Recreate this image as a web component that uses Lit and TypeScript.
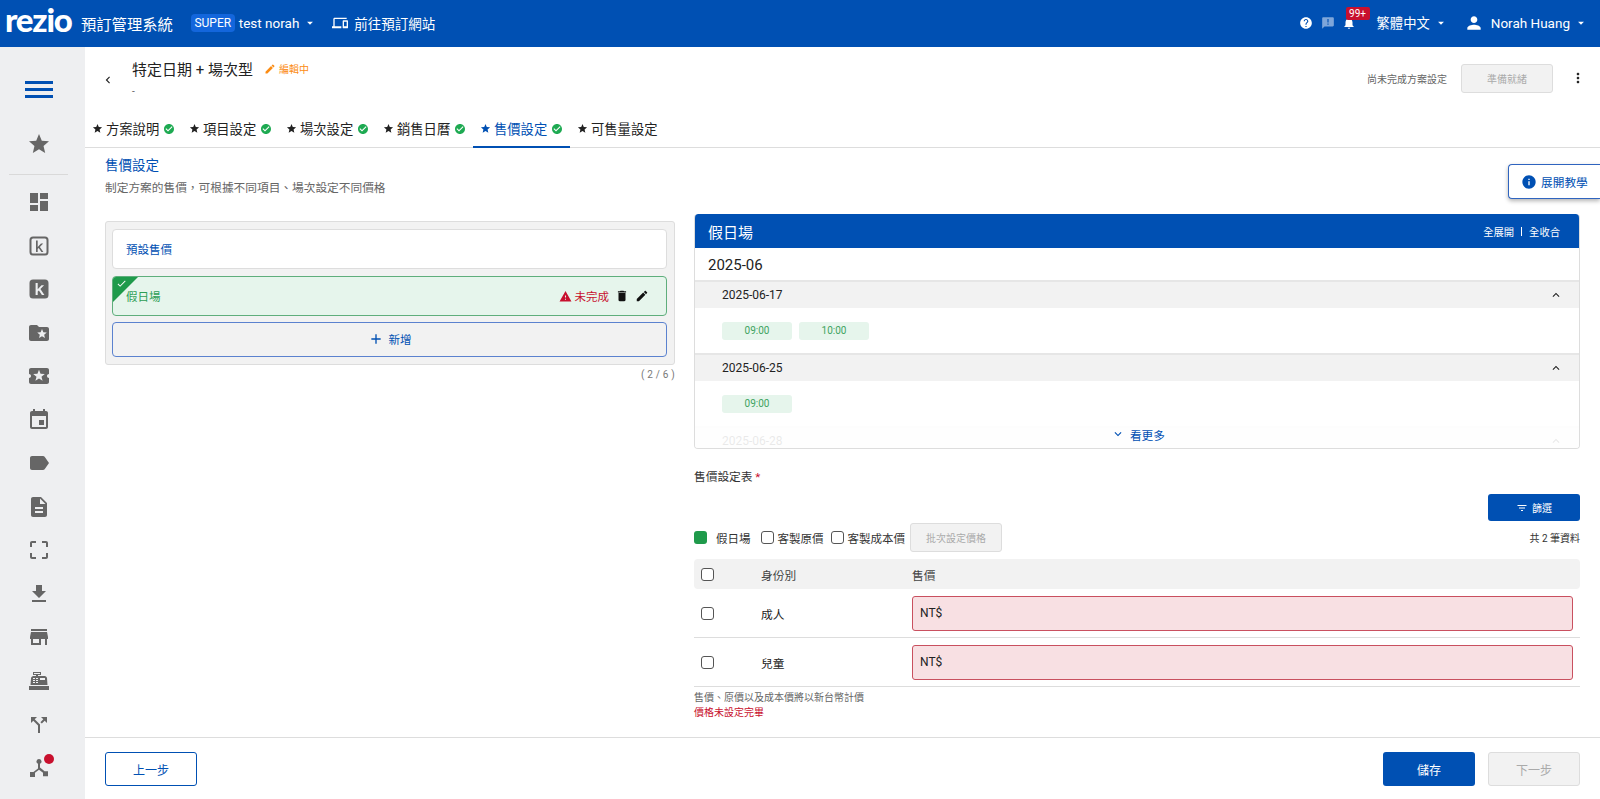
import { LitElement, html, css, svg } from "lit";
import { customElement } from "lit/decorators.js";

const P: Record<string, string> = {
  star: "M12 17.27L18.18 21l-1.64-7.03L22 9.24l-7.19-.61L12 2 9.19 8.63 2 9.24l5.46 4.73L5.82 21z",
  dash: "M3 13h8V3H3v10zm0 8h8v-6H3v6zm10 0h8V11h-8v10zm0-18v6h8V3h-8z",
  folder: "M20 6h-8l-2-2H4c-1.1 0-1.99.9-1.99 2L2 18c0 1.1.9 2 2 2h16c1.1 0 2-.9 2-2V8c0-1.1-.9-2-2-2zm-2.06 11L15 15.28 12.06 17l.78-3.33-2.59-2.24 3.41-.29L15 8l1.34 3.14 3.41.29-2.59 2.24.78 3.33z",
  ticket: "M20 12c0-1.1.9-2 2-2V6c0-1.1-.9-2-2-2H4c-1.1 0-1.99.9-1.99 2v4c1.1 0 1.99.9 1.99 2s-.89 2-2 2v4c0 1.1.9 2 2 2h16c1.1 0 2-.9 2-2v-4c-1.1 0-2-.9-2-2zm-4.42 4.8L12 14.5l-3.58 2.3 1.08-4.12-3.29-2.69 4.24-.25L12 5.8l1.54 3.95 4.24.25-3.29 2.69 1.09 4.11z",
  event: "M17 12h-5v5h5v-5zM16 1v2H8V1H6v2H5c-1.11 0-1.99.9-1.99 2L3 19c0 1.1.89 2 2 2h14c1.1 0 2-.9 2-2V5c0-1.1-.9-2-2-2h-1V1h-2zm3 18H5V8h14v11z",
  label: "M17.63 5.84C17.27 5.33 16.67 5 16 5L5 5.01C3.9 5.01 3 5.9 3 7v10c0 1.1.9 1.99 2 1.99L16 19c.67 0 1.27-.33 1.63-.84L22 12l-4.37-6.16z",
  doc: "M14 2H6c-1.1 0-1.99.9-1.99 2L4 20c0 1.1.89 2 1.99 2H18c1.1 0 2-.9 2-2V8l-6-6zm2 16H8v-2h8v2zm0-4H8v-2h8v2zm-3-5V3.5L18.5 9H13z",
  crop: "M3 5v4h2V5h4V3H5c-1.1 0-2 .9-2 2zm2 10H3v4c0 1.1.9 2 2 2h4v-2H5v-4zm14 4h-4v2h4c1.1 0 2-.9 2-2v-4h-2v4zm0-16h-4v2h4v4h2V5c0-1.1-.9-2-2-2z",
  down: "M19 9h-4V3H9v6H5l7 7 7-7zM5 18v2h14v-2H5z",
  store: "M20 4H4v2h16V4zm1 10v-2l-1-5H4l-1 5v2h1v6h10v-6h4v6h2v-6h1zm-9 4H6v-4h6v4z",
  cash: "M2,17H22V21H2V17M6.25,7H9V6H6V3H14V6H11V7H17.8C18.8,7 19.8,8 20,9L20.5,16H3.5L4.05,9C4.25,8 5.25,7 6.25,7M13,9V11H18V9H13M6,9V10H8V9H6M9,9V10H11V9H9M6,11V12H8V11H6M9,11V12H11V11H9M6,13V14H8V13H6M9,13V14H11V13H9M7,4V5H13V4H7Z",
  split: "M14 4l2.29 2.29-2.88 2.88 1.42 1.42 2.88-2.88L20 10V4zm-4 0H4v6l2.29-2.29 4.71 4.7V20h2v-8.41l-5.29-5.3z",
  help: "M12 2C6.48 2 2 6.48 2 12s4.48 10 10 10 10-4.48 10-10S17.52 2 12 2zm1 17h-2v-2h2v2zm2.07-7.75l-.9.92C13.45 12.9 13 13.5 13 15h-2v-.5c0-1.1.45-2.1 1.17-2.83l1.24-1.26c.37-.36.59-.86.59-1.41 0-1.1-.9-2-2-2s-2 .9-2 2H8c0-2.21 1.79-4 4-4s4 1.79 4 4c0 .88-.36 1.68-.93 2.25z",
  ann: "M20 2H4c-1.1 0-1.99.9-1.99 2L2 22l4-4h14c1.1 0 2-.9 2-2V4c0-1.1-.9-2-2-2zm-7 9h-2V5h2v6zm0 4h-2v-2h2v2z",
  bell: "M12 22c1.1 0 2-.9 2-2h-4c0 1.1.89 2 2 2zm6-6v-5c0-3.07-1.64-5.64-4.5-6.32V4c0-.83-.67-1.5-1.5-1.5s-1.5.67-1.5 1.5v.68C7.63 5.36 6 7.92 6 11v5l-2 2v1h16v-1l-2-2z",
  person: "M12 12c2.21 0 4-1.79 4-4s-1.79-4-4-4-4 1.79-4 4 1.79 4 4 4zm0 2c-2.67 0-8 1.34-8 4v2h16v-2c0-2.66-5.33-4-8-4z",
  devices: "M4 6h18V4H4c-1.1 0-2 .9-2 2v11H0v3h14v-3H4V6zm19 2h-6c-.55 0-1 .45-1 1v10c0 .55.45 1 1 1h6c.55 0 1-.45 1-1V9c0-.55-.45-1-1-1zm-1 9h-4v-7h4v7z",
  edit: "M3 17.25V21h3.75L17.81 9.94l-3.75-3.75L3 17.25zM20.71 7.04c.39-.39.39-1.02 0-1.41l-2.34-2.34c-.39-.39-1.02-.39-1.41 0l-1.83 1.83 3.75 3.75 1.83-1.83z",
  ok: "M12 2C6.48 2 2 6.48 2 12s4.48 10 10 10 10-4.48 10-10S17.52 2 12 2zm-2 15l-5-5 1.41-1.41L10 14.17l7.59-7.59L19 8l-9 9z",
  del: "M6 19c0 1.1.9 2 2 2h8c1.1 0 2-.9 2-2V7H6v12zM19 4h-3.5l-1-1h-5l-1 1H5v2h14V4z",
  warn: "M1 21h22L12 2 1 21zm12-3h-2v-2h2v2zm0-4h-2v-4h2v4z",
  info: "M12 2C6.48 2 2 6.48 2 12s4.48 10 10 10 10-4.48 10-10S17.52 2 12 2zm1 15h-2v-6h2v6zm0-8h-2V7h2v2z",
  filter: "M10 18h4v-2h-4v2zM3 6v2h18V6H3zm3 7h12v-2H6v2z",
  more: "M16.59 8.59L12 13.17 7.41 8.59 6 10l6 6 6-6z",
  less: "M12 8l-6 6 1.41 1.41L12 10.83l4.59 4.58L18 14z",
  add: "M19 13h-6v6h-2v-6H5v-2h6V5h2v6h6v2z",
  vert: "M12 8c1.1 0 2-.9 2-2s-.9-2-2-2-2 .9-2 2 .9 2 2 2zm0 2c-1.1 0-2 .9-2 2s.9 2 2 2 2-.9 2-2-.9-2-2-2zm0 6c-1.1 0-2 .9-2 2s.9 2 2 2 2-.9 2-2-.9-2-2-2z",
  caret: "M7 10l5 5 5-5z",
  left: "M15.41 7.41L14 6l-6 6 6 6 1.41-1.41L10.83 12z",
  check: "M9 16.17L4.83 12l-1.42 1.41L9 19 21 7l-1.41-1.41z",
  kfill: "M6 2.5h12A3.5 3.5 0 0 1 21.5 6v12a3.5 3.5 0 0 1-3.5 3.5H6A3.5 3.5 0 0 1 2.5 18V6A3.5 3.5 0 0 1 6 2.5zM8.6 6v12h2.1v-3.4l1.2-1.2 3 4.6h2.5l-4-6 3.7-3.7h-2.6l-3.8 4V6z",
  kline: "M6 2.5h12A3.5 3.5 0 0 1 21.5 6v12a3.5 3.5 0 0 1-3.5 3.5H6A3.5 3.5 0 0 1 2.5 18V6A3.5 3.5 0 0 1 6 2.5zm0 2A1.5 1.5 0 0 0 4.500 6v12A1.5 1.5 0 0 0 6 19.500h12a1.500 1.500 0 0 0 1.500-1.500V6A1.500 1.500 0 0 0 18 4.500zM9 6.500h1.700v6.400l3.300-3.400h2.200l-3.300 3.400 3.500 5h-2l-2.700-3.900-1 1v2.900H9z",
  nodes: "M12 3a2.500 2.500 0 0 1 1 4.800v3.800l4.600 3.600H21v5h-5v-3.400l-4-3.100-4 3.100V21H3v-5h3.400l4.600-3.600V7.800A2.500 2.500 0 0 1 12 3z",
};

const ic = (name: string, cls = "") =>
  html`<svg class="ic ${cls}" viewBox="0 0 24 24" aria-hidden="true">${svg`<path d=${P[name]}></path>`}</svg>`;

const SIDE = ["dash", "kline", "kfill", "folder", "ticket", "event", "label", "doc", "crop", "down", "store", "cash", "split"];
const TABS = ["方案說明", "項目設定", "場次設定", "銷售日曆", "售價設定", "可售量設定"];

@customElement("app-root")
export class AppRoot extends LitElement {
  static styles = css`
    :host {
      display: flex;
      flex-direction: column;
      width: 1600px;
      height: 799px;
      overflow: hidden;
      background: #fff;
      color: #222;
      font-family: Roboto, "Noto Sans CJK TC", sans-serif;
      font-size: 12px;
    }
    .ic { display: block; flex: none; fill: currentColor; }
    .s10 { width: 10px; height: 10px; }
    .s11 { width: 11px; height: 11px; }
    .s12 { width: 12px; height: 12px; }
    .s13 { width: 13px; height: 13px; }
    .s14 { width: 14px; height: 14px; }
    .s16 { width: 16px; height: 16px; }
    .s18 { width: 18px; height: 18px; }
    .s20 { width: 20px; height: 20px; }
    .s24 { width: 24px; height: 24px; }

    /* top bar */
    .top {
      flex: none;
      height: 47px;
      box-sizing: border-box;
      padding-bottom: 2px;
      background: #0050b3;
      color: #fff;
      display: flex;
      align-items: center;
      font-size: 13.5px;
    }
    .logo {
      margin-left: 5px;
      width: 72px;
      font-family: Lato, sans-serif;
      font-weight: 900;
      font-size: 33px;
      line-height: 30px;
      letter-spacing: -1.2px;
      padding-bottom: 8px;
    }
    .sys { margin-left: 4px; font-size: 15.3px; }
    .super {
      margin-left: 18px;
      background: #1366dc;
      border-radius: 4px;
      width: 44px;
      height: 18px;
      line-height: 18px;
      text-align: center;
      font-size: 12px;
      margin-right: 4px;
    }
    .caret { margin-left: 4px; }
    .devices { margin-left: 15px; margin-right: 6px; }
    .tools { margin-left: auto; display: flex; align-items: center; }
    .muted { color: #7ea6da; margin-left: 8px; }
    .bell { margin-left: 7px; position: relative; }
    .badge {
      position: absolute;
      left: 4px;
      top: -9px;
      width: 24px;
      height: 13px;
      line-height: 13px;
      border-radius: 2px;
      background: #c8102e;
      font-size: 10px;
      text-align: center;
    }
    .lang { margin-left: 21px; font-size: 13.3px; }
    .person { margin-left: 16px; margin-right: 7px; }
    .tools .last { margin-right: 12px; }

    /* body */
    .body { flex: 1; min-height: 0; display: flex; }
    .side {
      flex: none;
      width: 85px;
      background: #eeeff1;
      color: #666;
      display: flex;
      flex-direction: column;
      align-items: center;
      padding-top: 30px;
      box-sizing: border-box;
      padding-right: 8px;
    }
    .ham { width: 28px; height: 24px; display: flex; flex-direction: column; justify-content: center; gap: 4px; }
    .ham i { display: block; height: 3px; background: #0050b3; }
    .side .fav { margin-top: 31px; }
    .rule { width: 59px; height: 1px; background: #d9d9d9; margin: 18px 0 15px; }
    .nav { display: flex; flex-direction: column; gap: 19.56px; }
    .node { position: relative; }
    .dot { position: absolute; width: 10px; height: 10px; border-radius: 50%; background: #c8102e; right: -3px; top: -2px; }

    .main { flex: 1; min-width: 0; display: flex; flex-direction: column; position: relative; }
    .head { flex: none; height: 66px; display: flex; align-items: center; padding: 0 14px 0 16px; }
    .back { margin-right: 17px; color: #222; }
    .title { display: flex; align-items: center; height: 22px; font-size: 15px; color: #222; }
    .editing { display: flex; align-items: center; margin-left: 11px; color: #fb8c14; font-size: 10px; gap: 3px; }
    .sub { height: 23px; line-height: 23px; font-size: 10px; color: #666; }
    .state { margin-left: auto; color: #666; font-size: 10px; margin-right: 14px; margin-bottom: 4px; }
    .ready {
      width: 92px; height: 29px; box-sizing: border-box; margin-bottom: 4px;
      display: flex; align-items: center; justify-content: center;
      background: #f2f2f2; border: 1px solid #ddd; border-radius: 3px; color: #aaa; font-size: 10px;
    }
    .kebab { margin-left: 17px; margin-bottom: 4px; color: #222; }

    .tabs { flex: none; height: 35px; box-sizing: border-box; border-bottom: 1px solid #ddd; display: flex; }
    .tab {
      display: flex; align-items: center; width: 97px; height: 35px; box-sizing: border-box; padding: 0 0 4px 7px;
      font-size: 13.3px; color: #222; gap: 3px; flex: none;
    }
    .tab:last-child { width: auto; }
    .tab .g { color: #1eaa52; margin-left: 1px; }
    .tab.on { color: #0050b3; border-bottom: 2px solid #0050b3; padding-bottom: 2px; }

    .tutor {
      position: absolute; right: 0; top: 117px; width: 92px; height: 35px; box-sizing: border-box;
      display: flex; align-items: center; gap: 4px; padding-left: 12px;
      background: #fff; border: 1px solid #2f64bf; border-right: none; border-radius: 4px 0 0 4px;
      box-shadow: 0 2px 4px rgba(0,0,0,.3); color: #0050b3; font-size: 11.7px;
    }

    .content { flex: 1; min-height: 0; padding: 7px 20px 0 20px; }
    h2 { margin: 0; font-weight: 400; font-size: 13.5px; line-height: 20px; color: #0050b3; }
    .desc { margin-top: 5px; line-height: 16px; color: #666; font-size: 11.7px; }
    .cols { display: flex; gap: 19px; margin-top: 18px; }
    .left { flex: none; width: 570px; margin-top: 7px; }
    .right { flex: 1; min-width: 0; }

    .box {
      box-sizing: border-box; height: 144px; background: #f2f2f2; border: 1px solid #ddd; border-radius: 3px;
      padding: 6.5px 7px 0 6px; display: flex; flex-direction: column; gap: 6.5px;
    }
    .item {
      height: 40px; flex: none; box-sizing: border-box; padding: 0 14px 0 13px; background: #fff; border: 1px solid #ddd; border-radius: 4px;
      display: flex; align-items: center; font-size: 11.5px; color: #0050b3; position: relative; overflow: hidden;
    }
    .item.sel { background: #e6f5ec; border-color: #5fae7c; color: #2e9e55; margin-top: 1px; }
    .corner { position: absolute; left: 0; top: 0; width: 0; height: 0; border-style: solid; border-width: 25px 25px 0 0; border-color: #1f9a4b transparent transparent transparent; }
    .tick { position: absolute; left: 3px; top: 1px; color: #fff; }
    .acts { margin-left: auto; display: flex; align-items: center; color: #c8102e; padding-right: 3px; }
    .acts .t { margin-left: 3px; }
    .acts .b { color: #111; margin-left: 6px; }
    .acts .b2 { color: #111; margin-left: 6px; }
    .addb {
      height: 35px; flex: none; box-sizing: border-box; margin-top: -1px; background: #f2f2f2; border: 1px solid #5b82cf; border-radius: 4px;
      display: flex; align-items: center; justify-content: center; gap: 5px; color: #0050b3; font-size: 11.5px;
    }
    .count { margin-top: 3px; text-align: right; font-size: 10px; color: #777; line-height: 14px; letter-spacing: .2px; }

    .panel {
      height: 235px; box-sizing: border-box; border: 1px solid #ddd; border-top: none; border-radius: 4px;
      position: relative; overflow: hidden;
    }
    .phead {
      height: 34px; margin: 0 -1px; background: #0050b3; color: #fff; display: flex; align-items: center; padding: 0 20px 0 14px;
      font-size: 15px; border-radius: 4px 4px 0 0;
    }
    .links { margin-left: auto; font-size: 10.3px; display: flex; align-items: center; gap: 7px; }
    .links i { display: block; width: 1px; height: 9px; background: #fff; }
    .month { height: 32px; line-height: 34px; padding-left: 13px; font-size: 15px; color: #222; }
    .ghead {
      height: 28px; box-sizing: border-box; border-top: 2px solid #e6e6e6; background: #f2f2f2;
      display: flex; align-items: center; padding: 0 16px 0 27px; font-size: 12px; color: #222;
    }
    .ghead .ic { margin-left: auto; }
    .gbody { height: 45px; box-sizing: border-box; padding-top: 14px; padding-left: 27px; display: flex; gap: 7px; }
    .tag { width: 70px; height: 18px; line-height: 18px; text-align: center; border-radius: 3px; background: #e6f5ec; color: #3ea35f; font-size: 10px; }
    .fade {
      position: absolute; left: 0; right: 0; bottom: 0; height: 24px; background: rgba(255,255,255,.9);
      display: flex; align-items: center; justify-content: flex-end; gap: 5px; padding: 0 414px 4px 0; color: #0050b3; font-size: 11.7px;
      box-sizing: border-box;
    }

    .ftitle { margin-top: 20px; line-height: 16px; color: #333; font-size: 11.7px; }
    .ftitle b { color: #c8102e; font-weight: 400; }
    .frow { margin-top: 9px; display: flex; justify-content: flex-end; }
    .btn {
      height: 27px; width: 92px; box-sizing: border-box; border-radius: 3px; background: #0050b3; color: #fff;
      display: flex; align-items: center; justify-content: center; gap: 4px; font-size: 10px;
    }
    .legend { margin-top: 2px; height: 29px; display: flex; align-items: center; font-size: 11.5px; color: #333; }
    .swatch { width: 13px; height: 13px; border-radius: 3px; background: #1f9a4b; margin-right: 9px; }
    .cb { display: block; flex: none; width: 13px; height: 13px; box-sizing: border-box; border: 1px solid #555; border-radius: 3px; background: #fff; }
    .legend .cb { margin-left: 10px; margin-right: 4px; }
    .legend .cb.n { margin-left: 7px; }
    .batch {
      margin-left: 5px; width: 92px; height: 29px; box-sizing: border-box; background: #f2f2f2; border: 1px solid #ddd; border-radius: 3px;
      display: flex; align-items: center; justify-content: center; color: #aaa; font-size: 10px;
    }
    .total { margin-left: auto; font-size: 10px; color: #333; }

    .tr { display: grid; grid-template-columns: 60px 151px 1fr; align-items: center; padding: 0 7px; font-size: 11.7px; }
    .thead { margin-top: 7px; height: 30px; background: #f2f2f2; border-radius: 4px; color: #444; }
    .trow { height: 49px; box-sizing: border-box; border-bottom: 1px solid #ddd; }
    .input {
      height: 35px; box-sizing: border-box; background: #f8e0e3; border: 1px solid #c9505f; border-radius: 3px;
      display: flex; align-items: center; padding-left: 7px; font-size: 12px; color: #222;
    }
    .note { line-height: 16px; margin-top: 3px; font-size: 10px; color: #666; }
    .err { line-height: 13px; font-size: 10px; color: #c8102e; }

    .foot {
      flex: none; height: 62px; box-sizing: border-box; border-top: 1px solid #ddd; padding: 14px 20px 0 20px;
      display: flex; align-items: flex-start; gap: 13px; font-size: 12px;
    }
    .fb { width: 92px; height: 34px; box-sizing: border-box; border-radius: 3px; display: flex; align-items: center; justify-content: center; }
    .fb.prev { border: 1px solid #0050b3; color: #0050b3; margin-right: auto; }
    .fb.save { background: #0050b3; color: #fff; }
    .fb.next { background: #f2f2f2; border: 1px solid #ddd; color: #aaa; }
  `;

  private group(date: string, tags: string[]) {
    return html`
      <div class="ghead">${date}${ic("less", "s14")}</div>
      <div class="gbody">${tags.map((t) => html`<div class="tag">${t}</div>`)}</div>
    `;
  }

  private row(name: string) {
    return html`
      <div class="tr trow">
        <span class="cb"></span>
        <span>${name}</span>
        <div class="input">NT$</div>
      </div>
    `;
  }

  render() {
    return html`
      <header class="top">
        <div class="logo">rezio</div>
        <div class="sys">預訂管理系統</div>
        <div class="super">SUPER</div>
        <div>test norah</div>
        ${ic("caret", "s14 caret")}
        ${ic("devices", "s16 devices")}
        <div>前往預訂網站</div>
        <div class="tools">
          ${ic("help", "s14")}
          ${ic("ann", "s14 muted")}
          <div class="bell">${ic("bell", "s14")}<div class="badge">99+</div></div>
          <div class="lang">繁體中文</div>
          ${ic("caret", "s14 caret")}
          ${ic("person", "s20 person")}
          <div>Norah Huang</div>
          ${ic("caret", "s14 caret last")}
        </div>
      </header>
      <div class="body">
        <aside class="side">
          <div class="ham"><i></i><i></i><i></i></div>
          ${ic("star", "s24 fav")}
          <div class="rule"></div>
          <nav class="nav">
            ${SIDE.map((n) => ic(n, "s24"))}
            <div class="node">${ic("nodes", "s24")}<span class="dot"></span></div>
          </nav>
        </aside>
        <main class="main">
          <section class="head">
            ${ic("left", "s14 back")}
            <div>
              <div class="title">特定日期 + 場次型
                <span class="editing">${ic("edit", "s12")}編輯中</span>
              </div>
              <div class="sub">-</div>
            </div>
            <div class="state">尚未完成方案設定</div>
            <div class="ready">準備就緒</div>
            ${ic("vert", "s16 kebab")}
          </section>
          <nav class="tabs">
            ${TABS.map(
              (t, i) => html`<div class="tab ${i === 4 ? "on" : ""}">
                ${ic("star", "s11")}<span>${t}</span>${i < 5 ? ic("ok", "s12 g") : ""}
              </div>`
            )}
          </nav>
          <div class="tutor">${ic("info", "s16")}<span>展開教學</span></div>
          <section class="content">
            <h2>售價設定</h2>
            <div class="desc">制定方案的售價，可根據不同項目、場次設定不同價格</div>
            <div class="cols">
              <div class="left">
                <div class="box">
                  <div class="item">預設售價</div>
                  <div class="item sel">
                    <span class="corner"></span>
                    ${ic("check", "s11 tick")}
                    假日場
                    <div class="acts">
                      ${ic("warn", "s13")}<span class="t">未完成</span>
                      ${ic("del", "s14 b")}${ic("edit", "s14 b2")}
                    </div>
                  </div>
                  <div class="addb">${ic("add", "s16")}<span>新增</span></div>
                </div>
                <div class="count">( 2 / 6 )</div>
              </div>
              <div class="right">
                <div class="panel">
                  <div class="phead">假日場<div class="links"><span>全展開</span><i></i><span>全收合</span></div></div>
                  <div class="month">2025-06</div>
                  ${this.group("2025-06-17", ["09:00", "10:00"])}
                  ${this.group("2025-06-25", ["09:00"])}
                  ${this.group("2025-06-28", [])}
                  <div class="fade">${ic("more", "s14")}<span>看更多</span></div>
                </div>
                <div class="ftitle">售價設定表 <b>*</b></div>
                <div class="frow"><div class="btn">${ic("filter", "s12")}<span>篩選</span></div></div>
                <div class="legend">
                  <span class="swatch"></span><span>假日場</span>
                  <span class="cb"></span><span>客製原價</span>
                  <span class="cb n"></span><span>客製成本價</span>
                  <div class="batch">批次設定價格</div>
                  <div class="total">共 2 筆資料</div>
                </div>
                <div class="tr thead"><span class="cb"></span><span>身份別</span><span>售價</span></div>
                ${this.row("成人")}
                ${this.row("兒童")}
                <div class="note">售價、原價以及成本價將以新台幣計價</div>
                <div class="err">價格未設定完畢</div>
              </div>
            </div>
          </section>
          <footer class="foot">
            <div class="fb prev">上一步</div>
            <div class="fb save">儲存</div>
            <div class="fb next">下一步</div>
          </footer>
        </main>
      </div>
    `;
  }
}
